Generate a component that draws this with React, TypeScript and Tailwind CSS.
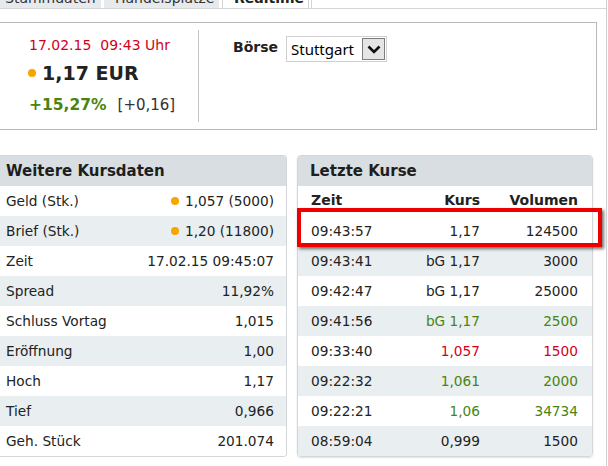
import { ReactNode } from "react";

const font = { fontFamily: '"DejaVu Sans", Verdana, sans-serif' };

const green = "text-[#4a8410]";
const red = "text-[#d3001c]";

function Dot() {
  return <span className="inline-block w-[8px] h-[8px] rounded-full bg-[#f7a600]" />;
}

const kursdaten: { label: string; value: ReactNode }[] = [
  { label: "Geld (Stk.)", value: <span className="flex items-center gap-[6px]"><Dot />1,057 (5000)</span> },
  { label: "Brief (Stk.)", value: <span className="flex items-center gap-[6px]"><Dot />1,20 (11800)</span> },
  { label: "Zeit", value: "17.02.15 09:45:07" },
  { label: "Spread", value: "11,92%" },
  { label: "Schluss Vortag", value: "1,015" },
  { label: "Eröffnung", value: "1,00" },
  { label: "Hoch", value: "1,17" },
  { label: "Tief", value: "0,966" },
  { label: "Geh. Stück", value: "201.074" },
];

const kurse = [
  { zeit: "09:43:57", kurs: "1,17", vol: "124500", color: "" },
  { zeit: "09:43:41", kurs: "bG 1,17", vol: "3000", color: "" },
  { zeit: "09:42:47", kurs: "bG 1,17", vol: "25000", color: "" },
  { zeit: "09:41:56", kurs: "bG 1,17", vol: "2500", color: green },
  { zeit: "09:33:40", kurs: "1,057", vol: "1500", color: red },
  { zeit: "09:22:32", kurs: "1,061", vol: "2000", color: green },
  { zeit: "09:22:21", kurs: "1,06", vol: "34734", color: green },
  { zeit: "08:59:04", kurs: "0,999", vol: "1500", color: "" },
];

export default function App() {
  return (
    <div
      className="relative w-[607px] h-[466px] overflow-hidden bg-white border-r border-[#cfcfcf] text-[#222]"
      style={font}
    >
      {/* Tabs (cut off at top) */}
      <div className="h-[9px] overflow-hidden border-b border-[#d4d4d4]">
        <div className="flex -mt-[12px] text-[14px]">
          <div className="w-[101px] h-[21px] leading-[21px] pl-[5px] bg-[#e6eaed] text-[#333]">Stammdaten</div>
          <div className="ml-[3px] w-[115px] h-[21px] leading-[21px] pl-[11px] bg-[#e6eaed] text-[#333]">Handelsplätze</div>
          <div className="ml-[3px] w-[87px] h-[21px] leading-[21px] pl-[11px] bg-white font-bold border-x border-[#d4d4d4]">Realtime</div>
          <div className="ml-[2px] flex-1 h-[21px] border-l border-[#d4d4d4]" />
        </div>
      </div>

      {/* Quote box */}
      <div className="mt-[13px] w-[597px] h-[108px] border-y border-r border-[#b9b9b9] flex py-[7px]">
        <div className="w-[199px] border-r border-[#c4c4c4] pl-[29px] pt-[5px]">
          <div className={`h-[20px] leading-[20px] text-[14px] ${red}`}>17.02.15&nbsp;&nbsp;09:43 Uhr</div>
          <div className="mt-[4px] h-[28px] flex items-center gap-[6px] -ml-[1px]">
            <Dot />
            <span className="text-[19px] font-bold">1,17 EUR</span>
          </div>
          <div className="mt-[8px] h-[20px] leading-[20px] flex items-center">
            <span className={`text-[15.5px] font-bold ${green}`}>+15,27%</span>
            <span className="ml-[11px] text-[15px] text-[#333]">[+0,16]</span>
          </div>
        </div>
        <div className="pl-[34px] pt-[5px] flex items-start gap-[8px]">
          <span className="font-bold text-[14px] leading-[22px] mt-[1px]">Börse</span>
          <div className="mt-[1px] w-[101px] h-[26px] border border-[#d0d0d0] flex items-center bg-white">
            <span
              className="flex-1 pl-[4px] text-[15px] text-black leading-none"
              style={{ fontFamily: '"Noto Sans", "Open Sans", sans-serif' }}
            >
              Stuttgart
            </span>
            <span className="mr-[1px] w-[23px] h-[22px] border border-[#7d7d7d] bg-[#e5e5e5] flex items-center justify-center">
              <svg width="14" height="9" viewBox="0 0 14 9">
                <polyline points="1.5,1.5 7,7 12.5,1.5" fill="none" stroke="#111" strokeWidth="2.6" />
              </svg>
            </span>
          </div>
        </div>
      </div>

      {/* Panels */}
      <div className="mt-[25px] flex">
        <div className="w-[287px] border-y border-r border-[#d3d7da] rounded-r-[4px] overflow-hidden">
          <div className="h-[30px] leading-[30px] bg-[#d8dee2] pl-[6px] font-bold text-[15px] text-[#1e1e1e]">
            Weitere Kursdaten
          </div>
          {kursdaten.map((r, i) => (
            <div
              key={r.label}
              className={`h-[30px] flex items-center justify-between pl-[6px] pr-[12px] text-[13.7px] ${
                i % 2 === 1 ? "bg-[#e9eef1]" : "bg-white"
              }`}
            >
              <span>{r.label}</span>
              <span>{r.value}</span>
            </div>
          ))}
        </div>

        <div className="ml-[10px] w-[296px] border border-[#d3d7da] rounded-[4px] overflow-hidden shadow-[0_1px_2px_rgba(0,0,0,0.12)]">
          <div className="h-[30px] leading-[30px] bg-[#d8dee2] pl-[12px] font-bold text-[15px] text-[#1e1e1e]">
            Letzte Kurse
          </div>
          <div className="h-[30px] flex items-center pl-[13px] pr-[14px] pb-[2px] font-bold text-[14px] bg-white">
            <span className="flex-1">Zeit</span>
            <span className="w-[100px] text-right">Kurs</span>
            <span className="w-[98px] text-right">Volumen</span>
          </div>
          {kurse.map((r, i) => (
            <div
              key={r.zeit}
              className={`h-[30px] flex items-center pl-[13px] pr-[14px] text-[13.7px] ${
                i % 2 === 1 ? "bg-[#e9eef1]" : "bg-white"
              }`}
            >
              <span className="flex-1">{r.zeit}</span>
              <span className={`w-[100px] text-right ${r.color}`}>{r.kurs}</span>
              <span className={`w-[98px] text-right ${r.color}`}>{r.vol}</span>
            </div>
          ))}
        </div>
      </div>

      {/* Highlight annotation */}
      <div className="absolute left-[297px] top-[208px] w-[305px] h-[39px] border-4 border-[#ec0000] shadow-[2px_2px_3px_rgba(0,0,0,0.55)]" />
    </div>
  );
}
